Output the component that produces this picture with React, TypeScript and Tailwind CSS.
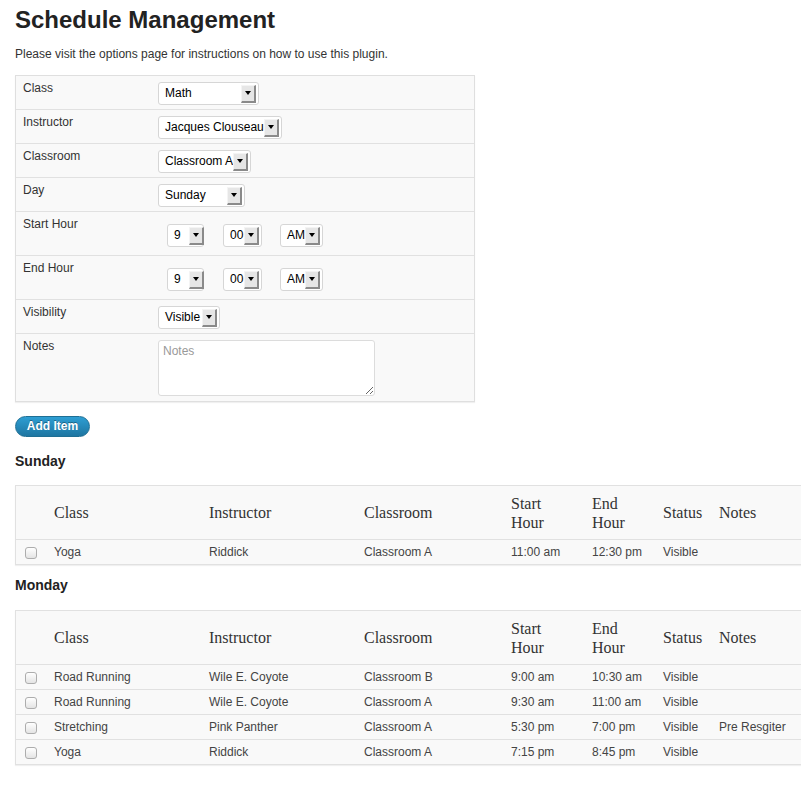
import React from "react";

function Arrow() {
  return (
    <div className="ml-auto mr-[2px] flex h-[18px] w-[15px] shrink-0 items-center justify-center border-t border-l border-t-[#f4f4f4] border-l-[#f4f4f4] border-r-2 border-b-2 border-r-[#8a8a8a] border-b-[#8a8a8a] bg-[#e6e6e6]">
      <div className="h-0 w-0 border-x-[3px] border-t-[4px] border-x-transparent border-t-black" />
    </div>
  );
}

function Sel({ w, text, textCls = "pl-[6px]" }: { w: string; text: string; textCls?: string }) {
  return (
    <div className={`flex h-[23px] items-center rounded-[3px] border border-[#d6d6d6] bg-white ${w}`}>
      <span className={`whitespace-nowrap pb-[2px] text-[12px] leading-[14px] text-black ${textCls}`}>{text}</span>
      <Arrow />
    </div>
  );
}

function FormRow({
  label,
  h,
  first,
  children,
}: {
  label: string;
  h: string;
  first?: boolean;
  children: React.ReactNode;
}) {
  return (
    <div className={`flex ${h} ${first ? "" : "border-t border-[#e1e1e1]"}`}>
      <div className="w-[142px] shrink-0 pl-[7px] pt-[4px] text-[12px] leading-[17px] text-[#333]">{label}</div>
      <div className="flex-1">{children}</div>
    </div>
  );
}

function HourSelects() {
  return (
    <div className="ml-[9px] mt-[12px] flex items-start">
      <Sel w="w-[37px]" text="9" textCls="pl-[6px] pr-[8px]" />
      <div className="ml-[19px]">
        <Sel w="w-[39px]" text="00" textCls="pl-[6px]" />
      </div>
      <div className="ml-[18px]">
        <Sel w="w-[43px]" text="AM" textCls="pl-[6px]" />
      </div>
    </div>
  );
}

const cols = "grid grid-cols-[30px_155px_155px_147px_81px_71px_56px_134px]";

type Row = { cls: string; ins: string; room: string; start: string; end: string; status: string; notes: string };

function ScheduleTable({ rows }: { rows: Row[] }) {
  return (
    <div className="w-[830px] border border-[#e1e1e1] bg-[#f9f9f9] shadow-[0_1px_1px_rgba(0,0,0,0.06)]">
      <div className={`${cols} h-[53px] items-center font-['Liberation_Serif','Times_New_Roman',serif] text-[16px] leading-[19px] text-[#333]`}>
        <div />
        <div className="pl-[8px]">Class</div>
        <div className="pl-[8px]">Instructor</div>
        <div className="pl-[8px]">Classroom</div>
        <div className="pl-[8px]">
          Start
          <br />
          Hour
        </div>
        <div className="pl-[8px]">
          End
          <br />
          Hour
        </div>
        <div className="pl-[8px]">Status</div>
        <div className="pl-[8px]">Notes</div>
      </div>
      {rows.map((r, i) => (
        <div key={i} className={`${cols} h-[25px] items-center border-t border-[#e1e1e1] text-[12px] leading-[14px] text-[#444]`}>
          <div className="pl-[9px] pt-[1px]">
            <div className="h-[12px] w-[12px] rounded-[3px] border border-[#adadad] bg-linear-to-b from-white to-[#e4e4e4]" />
          </div>
          <div className="pl-[8px]">{r.cls}</div>
          <div className="pl-[8px]">{r.ins}</div>
          <div className="pl-[8px]">{r.room}</div>
          <div className="pl-[8px]">{r.start}</div>
          <div className="pl-[8px]">{r.end}</div>
          <div className="pl-[8px]">{r.status}</div>
          <div className="whitespace-nowrap pl-[8px]">{r.notes}</div>
        </div>
      ))}
    </div>
  );
}

export default function App() {
  const sunday: Row[] = [
    { cls: "Yoga", ins: "Riddick", room: "Classroom A", start: "11:00 am", end: "12:30 pm", status: "Visible", notes: "" },
  ];
  const monday: Row[] = [
    { cls: "Road Running", ins: "Wile E. Coyote", room: "Classroom B", start: "9:00 am", end: "10:30 am", status: "Visible", notes: "" },
    { cls: "Road Running", ins: "Wile E. Coyote", room: "Classroom A", start: "9:30 am", end: "11:00 am", status: "Visible", notes: "" },
    { cls: "Stretching", ins: "Pink Panther", room: "Classroom A", start: "5:30 pm", end: "7:00 pm", status: "Visible", notes: "Pre Resgiter" },
    { cls: "Yoga", ins: "Riddick", room: "Classroom A", start: "7:15 pm", end: "8:45 pm", status: "Visible", notes: "" },
  ];

  return (
    <div className="min-h-[800px] w-full overflow-hidden bg-white pb-[30px] pl-[15px] font-['Liberation_Sans',Arial,sans-serif] text-[#333]">
      <h1 className="mt-[6px] text-[24px] font-bold leading-[27px] text-[#222]">Schedule Management</h1>
      <p className="mt-[12px] text-[12px] leading-[18px] text-[#333]">
        Please visit the options page for instructions on how to use this plugin.
      </p>

      <div className="mt-[12px] w-[460px] border border-[#dfdfdf] bg-[#f9f9f9] shadow-[0_1px_1px_rgba(0,0,0,0.06)]">
        <FormRow label="Class" h="h-[33px]" first>
          <div className="mt-[6px]">
            <Sel w="w-[101px]" text="Math" />
          </div>
        </FormRow>
        <FormRow label="Instructor" h="h-[34px]">
          <div className="mt-[6px]">
            <Sel w="w-[124px]" text="Jacques Clouseau" />
          </div>
        </FormRow>
        <FormRow label="Classroom" h="h-[34px]">
          <div className="mt-[6px]">
            <Sel w="w-[93px]" text="Classroom A" />
          </div>
        </FormRow>
        <FormRow label="Day" h="h-[34px]">
          <div className="mt-[6px]">
            <Sel w="w-[87px]" text="Sunday" />
          </div>
        </FormRow>
        <FormRow label="Start Hour" h="h-[44px]">
          <HourSelects />
        </FormRow>
        <FormRow label="End Hour" h="h-[44px]">
          <HourSelects />
        </FormRow>
        <FormRow label="Visibility" h="h-[34px]">
          <div className="mt-[6px]">
            <Sel w="w-[62px]" text="Visible" />
          </div>
        </FormRow>
        <FormRow label="Notes" h="h-[68px]">
          <textarea
            placeholder="Notes"
            className="mt-[6px] block h-[56px] w-[217px] rounded-[3px] border border-[#dcdcdc] bg-white px-[4px] pt-[3px] font-['Liberation_Sans',Arial,sans-serif] text-[12px] leading-[15px] text-black outline-none placeholder:text-[#999]"
          />
        </FormRow>
      </div>

      <button className="mt-[14px] block h-[21px] w-[75px] rounded-full border border-[#1f6f94] bg-linear-to-b from-[#2e9ed3] to-[#1e76a2] text-center text-[12px] font-bold leading-[19px] text-white [text-shadow:0_-1px_0_rgba(0,0,0,0.35)]">
        Add Item
      </button>

      <h3 className="mt-[14px] text-[14px] font-bold leading-[20px] text-[#222]">Sunday</h3>
      <div className="mt-[14px]">
        <ScheduleTable rows={sunday} />
      </div>

      <h3 className="mt-[10px] text-[14px] font-bold leading-[20px] text-[#222]">Monday</h3>
      <div className="mt-[15px]">
        <ScheduleTable rows={monday} />
      </div>
    </div>
  );
}
